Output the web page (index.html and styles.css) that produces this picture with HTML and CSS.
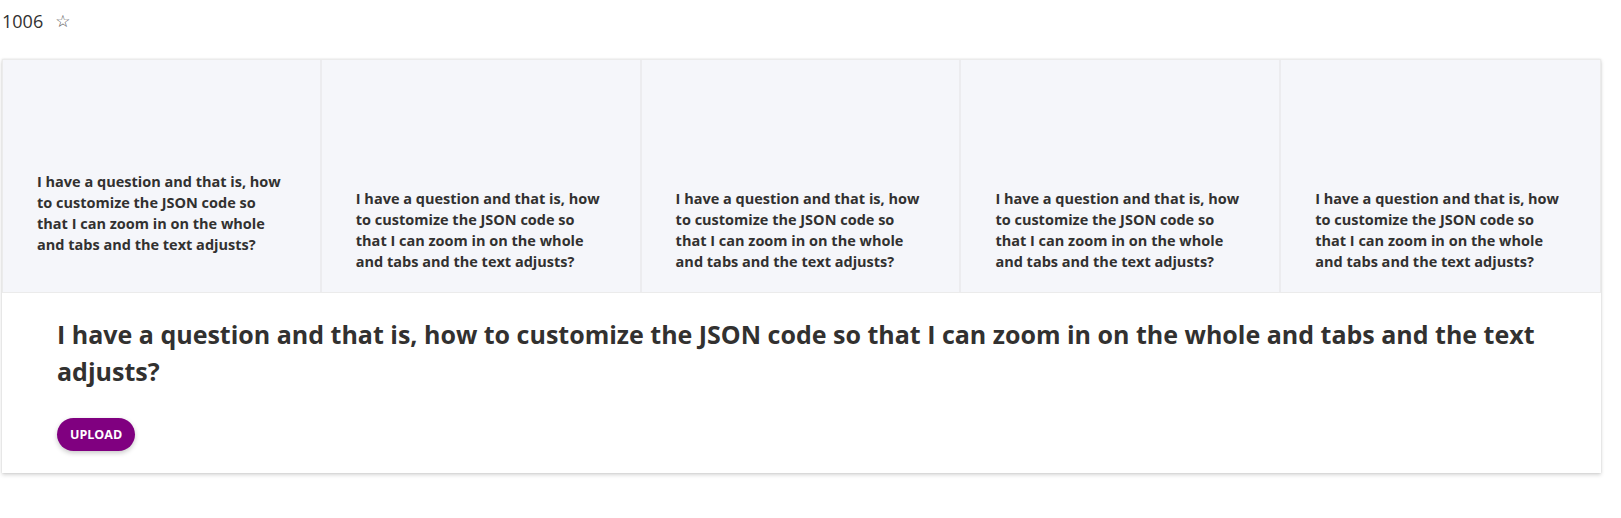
FILE: index.html
```html
<!DOCTYPE html>
<html>
<head>
<meta charset="utf-8">
<link rel="stylesheet" href="styles.css">
</head>
<body>
<div class="page">
<div class="header"><span class="num">1006</span><span class="star">☆</span></div>
<div class="card">
  <div class="tiles">
    <div class="tile tile-first"><p>I have a question and that is, how to customize the JSON code so that I can zoom in on the whole and tabs and the text adjusts?</p></div>
    <div class="tile"><p>I have a question and that is, how to customize the JSON code so that I can zoom in on the whole and tabs and the text adjusts?</p></div>
    <div class="tile"><p>I have a question and that is, how to customize the JSON code so that I can zoom in on the whole and tabs and the text adjusts?</p></div>
    <div class="tile"><p>I have a question and that is, how to customize the JSON code so that I can zoom in on the whole and tabs and the text adjusts?</p></div>
    <div class="tile tile-last"><p>I have a question and that is, how to customize the JSON code so that I can zoom in on the whole and tabs and the text adjusts?</p></div>
  </div>
  <div class="body">
    <h1 class="title">I have a question and that is, how to customize the JSON code so that I can zoom in on the whole and tabs and the text adjusts?</h1>
    <button class="upload">UPLOAD</button>
  </div>
</div>
</div>
</body>
</html>
```
FILE: styles.css
```css
html, body {
  margin: 0;
  padding: 0;
  background: #ffffff;
  font-family: "Open Sans", "Noto Sans", sans-serif;
  color: #323130;
}
.page {
  min-height: 518px;
  padding-bottom: 1px;
  box-sizing: border-box;
}
.header {
  display: flex;
  align-items: center;
  height: 42px;
  padding-left: 2px;
  gap: 12px;
}
.num {
  font-size: 18px;
  color: #323130;
}
.star {
  font-family: "DejaVu Sans", sans-serif;
  font-size: 17px;
  color: #555;
}
.card {
  margin: 17px 0 0 2px;
  width: 1599px;
  background: #fff;
  box-shadow: 0 2px 4px rgba(0,0,0,0.16), 0 0 2px rgba(0,0,0,0.1);
}
.tiles {
  display: grid;
  grid-template-columns: repeat(5, 1fr);
  height: 234px;
  border-top: 1px solid #ebebeb;
  border-bottom: 1px solid #ebebeb;
  box-sizing: border-box;
}
.tile {
  background: #f5f6fa;
  border-right: 2px solid #ececef;
  display: flex;
  align-items: flex-end;
  padding: 0 20px 20px 34px;
}
.tile-first { padding-bottom: 37px; border-left: 1px solid #ebebeb; }
.tile-last { border-right: 1px solid #ebebeb; }
.tile p {
  margin: 0;
  font-size: 14.5px;
  font-weight: 700;
  line-height: 21px;
  color: #323130;
  max-width: 247px;
}
.body {
  padding: 23px 60px 22px 55px;
}
.title {
  margin: 0;
  font-size: 25px;
  font-weight: 700;
  line-height: 37px;
  color: #323130;
}
.upload {
  margin-top: 28px;
  height: 33px;
  padding: 0 13px;
  border: none;
  border-radius: 17px;
  background: #800080;
  color: #fff;
  font-family: inherit;
  font-size: 12.5px;
  font-weight: 700;
  box-shadow: 0 2px 5px rgba(0,0,0,0.22);
}
```
